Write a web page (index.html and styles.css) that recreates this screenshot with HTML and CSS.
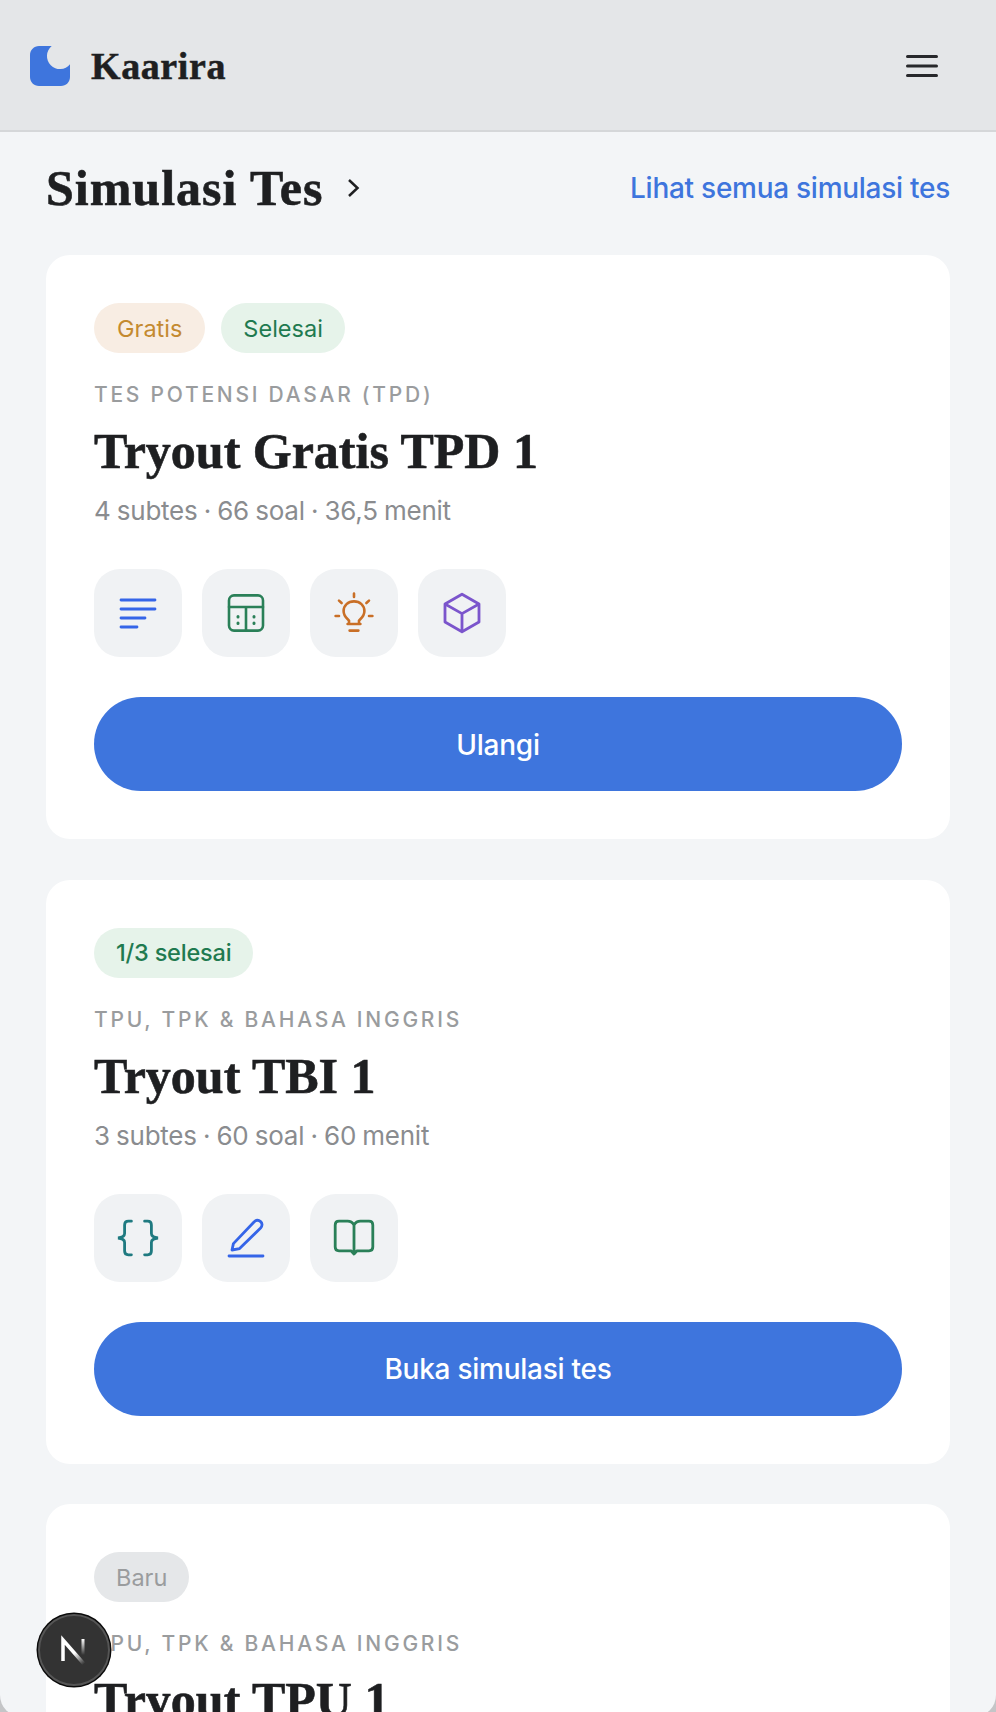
FILE: index.html
```html
<!DOCTYPE html>
<html lang="en">
<head>
    <meta charset="UTF-8">
    <meta name="viewport" content="width=device-width, initial-scale=1.0">
    <title>Kaarira</title>
    <link rel="stylesheet" href="styles.css">
</head>
<body>

    <header class="topbar">
        <div class="brand">
            <svg class="brand-logo" width="40" height="40" viewBox="0 0 40 40">
                <path fill="#3e75dd" d="M9 0H21.700A13 13 0 1 0 40 18.300V31C40 36 36 40 31 40H9C4 40 0 36 0 31V9C0 4 4 0 9 0Z"/>
            </svg>
            <span class="brand-name">Kaarira</span>
        </div>
        <svg class="menu-icon" width="32" height="22" viewBox="0 0 32 22">
            <path d="M1.500 1.500H30.500M1.500 11H30.500M1.500 20.500H30.500" stroke="#27282b" stroke-width="3" stroke-linecap="round" fill="none"/>
        </svg>
    </header>

    <main class="content">
        <div class="section-head">
            <div class="section-title">
                <h1>Simulasi Tes</h1>
                <svg width="13" height="20" viewBox="0 0 13 20">
                    <path d="M2 2L10.500 10L2 18" stroke="#1e1f21" stroke-width="2.500" fill="none"/>
                </svg>
            </div>
            <a class="see-all">Lihat semua simulasi tes</a>
        </div>

        <!-- Tryout cards -->
        <section class="card">
            <div class="tags">
                <span class="tag tag-orange">Gratis</span>
                <span class="tag tag-green">Selesai</span>
            </div>
            <p class="label">TES POTENSI DASAR (TPD)</p>
            <h2>Tryout Gratis TPD 1</h2>
            <p class="meta">4 subtes · 66 soal · 36,5 menit</p>
            <div class="subjects">
                <div class="subject">
                    <svg width="48" height="48" viewBox="0 0 24 24" fill="none" stroke="#3565e8" stroke-width="1.400" stroke-linecap="round">
                        <path d="M3.500 5.500H20.500M3.500 10H20.500M3.500 14.500H15.500M3.500 19H11.500"/>
                    </svg>
                </div>
                <div class="subject">
                    <svg width="48" height="48" viewBox="0 0 24 24" fill="none" stroke="#2a8058" stroke-width="1.300" stroke-linecap="round">
                        <rect x="3.500" y="3.200" width="17" height="17.600" rx="2.500"/>
                        <path d="M3.500 9H20.500M12 9V20.800"/>
                        <path d="M8 13.800V14M8 17V17.200M16 13.800V14M16 17V17.200" stroke-width="1.500"/>
                    </svg>
                </div>
                <div class="subject">
                    <svg width="48" height="48" viewBox="0 0 24 24" fill="none" stroke="#c96f26" stroke-width="1.300" stroke-linecap="round">
                        <path d="M9.500 17V15.800C9 15 6.800 14 6.800 11C6.800 8.200 9 6.200 12 6.200C15 6.200 17.200 8.200 17.200 11C17.200 14 15 15 14.500 15.800V17"/>
                        <path d="M8.800 17.500H15.200M9.800 20.800H14.200M12 2.300V4M4.500 5.800L5.800 7M19.500 5.800L18.200 7M2.800 13.500H4.500M19.500 13.500H21.200"/>
                    </svg>
                </div>
                <div class="subject">
                    <svg width="48" height="48" viewBox="0 0 24 24" fill="none" stroke="#7b55cc" stroke-width="1.400" stroke-linejoin="round">
                        <path d="M12 2.600L20.500 7.500V16.500L12 21.400L3.500 16.500V7.500Z"/>
                        <path d="M3.500 7.500L12 12.300L20.500 7.500M12 12.300V21.400"/>
                    </svg>
                </div>
            </div>
            <button class="action">Ulangi</button>
        </section>

        <section class="card">
            <div class="tags">
                <span class="tag tag-green tag-strong">1/3 selesai</span>
            </div>
            <p class="label">TPU, TPK &amp; BAHASA INGGRIS</p>
            <h2>Tryout TBI 1</h2>
            <p class="meta">3 subtes · 60 soal · 60 menit</p>
            <div class="subjects">
                <div class="subject">
                    <svg width="48" height="48" viewBox="0 0 24 24" fill="none" stroke="#1f7a80" stroke-width="1.400" stroke-linecap="round">
                        <path d="M8.700 3.600H7.200C6 3.600 5.300 4.400 5.300 5.500V9.800C5.300 10.900 4.600 11.700 2 12C4.600 12.300 5.300 13.100 5.300 14.200V18.500C5.300 19.600 6 20.400 7.200 20.400H8.700"/>
                        <path d="M15.300 3.600H16.800C18 3.600 18.700 4.400 18.700 5.500V9.800C18.700 10.900 19.400 11.700 22 12C19.400 12.300 18.700 13.100 18.700 14.200V18.500C18.700 19.600 18 20.400 16.800 20.400H15.300"/>
                    </svg>
                </div>
                <div class="subject">
                    <svg width="48" height="48" viewBox="0 0 24 24" fill="none" stroke="#3565e8" stroke-width="1.400" stroke-linecap="round" stroke-linejoin="round">
                        <path d="M5 18L5.700 14.800L16 4C17 3 18.300 2.900 19.300 3.800C20.300 4.700 20.200 6 19.300 7L8.800 17.300Z"/>
                        <path d="M3.500 21H20.500"/>
                    </svg>
                </div>
                <div class="subject">
                    <svg width="48" height="48" viewBox="0 0 24 24" fill="none" stroke="#2a8058" stroke-width="1.400" stroke-linejoin="round">
                        <path d="M12 5.500C11.300 4.300 10.200 3.600 8.800 3.600H4.500C3.300 3.600 2.600 4.300 2.600 5.500V16.500C2.600 17.700 3.300 18.400 4.500 18.400H10.500L12 20L13.500 18.400H19.500C20.700 18.400 21.400 17.700 21.400 16.500V5.500C21.400 4.300 20.700 3.600 19.500 3.600H15.200C13.800 3.600 12.700 4.300 12 5.500ZM12 5.500V20"/>
                    </svg>
                </div>
            </div>
            <button class="action">Buka simulasi tes</button>
        </section>

        <section class="card">
            <div class="tags">
                <span class="tag tag-gray">Baru</span>
            </div>
            <p class="label">TPU, TPK &amp; BAHASA INGGRIS</p>
            <h2>Tryout TPU 1</h2>
        </section>
    </main>

    <!-- dev indicator, sits on top of the page -->
    <div class="dev-badge">
        <svg width="40" height="40" viewBox="0 0 40 40" fill="none">
            <defs>
                <linearGradient id="fade-a" x1="10" y1="9" x2="31" y2="33" gradientUnits="userSpaceOnUse">
                    <stop offset="0.550" stop-color="#fff"/>
                    <stop offset="1" stop-color="#fff" stop-opacity="0"/>
                </linearGradient>
                <linearGradient id="fade-b" x1="29" y1="9" x2="29" y2="25" gradientUnits="userSpaceOnUse">
                    <stop offset="0" stop-color="#fff"/>
                    <stop offset="1" stop-color="#fff" stop-opacity="0"/>
                </linearGradient>
            </defs>
            <path d="M9 31V10L30 34" stroke="url(#fade-a)" stroke-width="3.500"/>
            <rect x="27.500" y="9" width="3" height="16" fill="url(#fade-b)"/>
        </svg>
    </div>

</body>
</html>
```

FILE: styles.css
```css
* {
    box-sizing: border-box;
}
html {
    height: 1712px;
    overflow: hidden;
    background-color: #c4c5c7;
}
body {
    margin: 0;
    height: 1717px;
    overflow: hidden;
    background-color: #f3f5f7;
    color: #1e1f21;
    font-family: Inter, sans-serif;
    border-radius: 0 0 22px 22px;
}
.topbar {
    display: flex;
    align-items: center;
    justify-content: space-between;
    height: 132px;
    padding: 2px 58px 0 30px;
    background-color: #e4e6e8;
    border-bottom: 2px solid #d5d7d9;
}
.brand {
    display: flex;
    align-items: center;
    gap: 21px;
}
.brand-name {
    font-family: "Liberation Serif", serif;
    font-weight: 700;
    font-size: 38px;
    letter-spacing: 0.6px;
    -webkit-text-stroke: 0.5px #1e1f21;
}
.content {
    padding: 0 46px;
}
.section-head {
    display: flex;
    align-items: center;
    justify-content: space-between;
    height: 123px;
    padding-bottom: 11px;
}
.section-title {
    display: flex;
    align-items: center;
    gap: 24px;
}
h1 {
    margin: 0;
    font-family: "Liberation Serif", serif;
    font-weight: 700;
    font-size: 50px;
    letter-spacing: 1px;
    -webkit-text-stroke: 0.6px #1e1f21;
}
.see-all {
    color: #3e75dd;
    font-size: 28px;
    font-weight: 500;
    letter-spacing: -0.27px;
}
.card {
    padding: 48px;
    margin-bottom: 40.5px;
    background-color: white;
    border-radius: 24px;
}
.tags {
    display: flex;
    gap: 16px;
}
.tag {
    display: flex;
    align-items: center;
    height: 50px;
    padding: 0 22px;
    border-radius: 25px;
    font-size: 23.5px;
}
.tag-strong {
    font-weight: 500;
    letter-spacing: -0.2px;
}
.tag-orange {
    padding: 0 23px;
    background-color: #f8ede3;
    color: #c48a30;
}
.tag-green {
    background-color: #e6f3ea;
    color: #1f7a50;
}
.tag-gray {
    background-color: #e5e7e9;
    color: #9a9c9e;
}
.label {
    margin: 26px 0 0;
    color: #9a9c9e;
    font-size: 21px;
    font-weight: 500;
    line-height: 32px;
    letter-spacing: 2.75px;
}
h2 {
    margin: 10px 0 0;
    font-family: "Liberation Serif", serif;
    font-weight: 700;
    font-size: 50px;
    line-height: 60px;
    -webkit-text-stroke: 0.6px #1e1f21;
}
.meta {
    margin: 12px 0 0;
    color: #8a8c8f;
    font-size: 26px;
    line-height: 36px;
    letter-spacing: -0.25px;
    word-spacing: -0.8px;
}
.subjects {
    display: flex;
    gap: 20px;
    margin-top: 40px;
}
.subject {
    display: flex;
    align-items: center;
    justify-content: center;
    width: 88px;
    height: 88px;
    background-color: #f0f2f4;
    border-radius: 26px;
}
.action {
    display: block;
    width: 100%;
    height: 94px;
    margin-top: 40px;
    padding-top: 2px;
    background-color: #3e75dd;
    color: white;
    border: none;
    border-radius: 47px;
    font-family: Inter, sans-serif;
    font-size: 28px;
    font-weight: 500;
    letter-spacing: -0.25px;
}
.dev-badge {
    position: absolute;
    left: 38px;
    top: 1614px;
    display: flex;
    align-items: center;
    justify-content: center;
    width: 72px;
    height: 72px;
    background-color: #333;
    border: 2px solid #555;
    border-radius: 50%;
    box-shadow: 0 0 0 1.500px #0a0a0a;
}
```
